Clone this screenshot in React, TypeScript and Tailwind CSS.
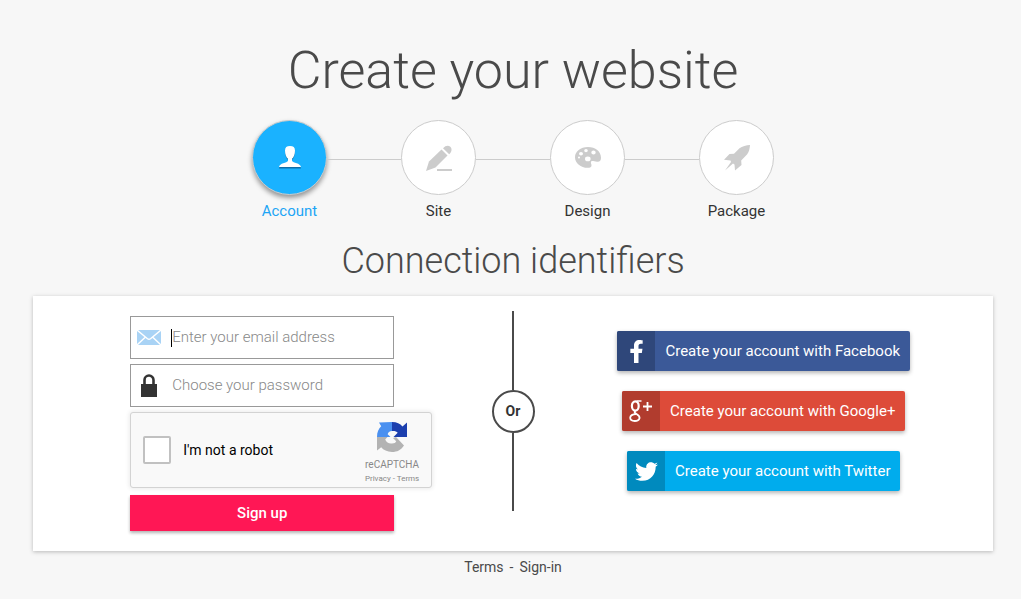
import type { ReactNode } from "react";
import { FaFacebookF, FaTwitter } from "react-icons/fa";

function UserIcon() {
  return (
    <svg width="24" height="23" viewBox="0 0 24 23" aria-hidden="true">
      <g fill="#0f6ea8" transform="translate(0 1)">
        <path d="M12 0C8.600 0 7 1.300 7 4.500c0 4 1.200 6.800 3 8.300v2.200c-1 1.800-8.500 2-9 6.500h22c-.5-4.500-8-4.700-9-6.500v-2.200c1.800-1.500 3-4.300 3-8.300C17 1.300 15.400 0 12 0z" />
      </g>
      <path
        fill="#fff"
        d="M12 0C8.600 0 7 1.300 7 4.500c0 4 1.200 6.800 3 8.300v2.200c-1 1.800-8.500 2-9 6h22c-.5-4-8-4.200-9-6v-2.200c1.800-1.500 3-4.300 3-8.300C17 1.300 15.400 0 12 0z"
      />
    </svg>
  );
}

function PencilIcon() {
  return (
    <svg width="28" height="28" viewBox="0 0 28 28" fill="#ccc" aria-hidden="true">
      <path d="M16.500 5.500 22.500 11.500 10.500 23.500 1 27 4 17.500z" />
      <path d="M18 4.200C20.500 1.300 23.500 1 25.300 2.700 27.200 4.600 27 7.500 24.200 10.200z" />
      <path d="M12 25h15v2H12z" />
    </svg>
  );
}

function PaletteIcon() {
  return (
    <svg width="26" height="21" viewBox="0 0 26 21" aria-hidden="true">
      <path
        fill="#ccc"
        fillRule="evenodd"
        d="M13 0C5.500 0 0 4.500 0 10.200 0 16.200 6 20.800 12.500 20.800c2.800 0 4-.8 4-2.300 0-1.500-.6-1.800-.6-3 0-1.200.9-1.600 2.200-1.500l3.900.7c2.600.4 4-1.200 4-4C26 4.500 20.500 0 13 0zM11 2a1.800 1.600 0 1 1 0 3.200A1.800 1.600 0 0 1 11 2zM18.500 3.500a2.200 2 0 1 1 0 4 2.200 2 0 0 1 0-4zM6 5a2 1.800 0 1 1 0 3.600A2 1.800 0 0 1 6 5zM4 9.500a1 1 0 1 1 0 2 1 1 0 0 1 0-2zM12.800 9.500a2.800 2.400 0 1 1 0 4.800 2.800 2.400 0 0 1 0-4.800z"
      />
    </svg>
  );
}

function RocketIcon() {
  return (
    <svg width="26" height="26" viewBox="0 0 26 26" fill="#ccc" aria-hidden="true">
      <path d="M26 0c-.2 3.500-1 7-3 9.500L17.200 15.500 17.500 20 11 25.500 10.500 19.500 9 18.500 1 25.500 7 17 6.500 15.500 0 14.800 5.500 9 10 8.700 15.500 3.300C18 1.200 22.500.2 26 0z" />
    </svg>
  );
}

function MailIcon() {
  return (
    <svg width="24" height="15" viewBox="0 0 24 15" aria-hidden="true">
      <path fill="#a9d3f5" d="M0 0h24v15H0z" />
      <path d="M0 0 10.500 8.700Q12 9.800 13.500 8.700L24 0M0 15 8.500 7M24 15 15.500 7" fill="none" stroke="#fff" strokeWidth="1.400" />
    </svg>
  );
}

function LockIcon() {
  return (
    <svg width="16" height="23" viewBox="0 0 16 23" aria-hidden="true">
      <path fill="#333" d="M0 10h16v13H0z" />
      <path d="M3.500 11V6a4.500 4.500 0 0 1 9 0v5" fill="none" stroke="#333" strokeWidth="2.600" />
    </svg>
  );
}

function GooglePlusIcon() {
  return (
    <svg width="24" height="22" viewBox="0 0 24 22" fill="none" stroke="#fff" aria-hidden="true">
      <ellipse cx="6.300" cy="6" rx="3.400" ry="4.600" strokeWidth="2.200" />
      <path d="M7.500 1H12.500" strokeWidth="1.400" />
      <path d="M6.500 10.500C5 12 5.500 12.800 7.500 14c2.500 1.500 3.500 2.300 3 4.300-.5 2-2.500 2.700-4.700 2.700C3 21 1.200 19.800 1.200 17.800 1.200 15.500 3.500 14.200 7 14.200" strokeWidth="1.800" />
      <path d="M14 6.500h9M18.500 2v9" strokeWidth="1.800" />
    </svg>
  );
}

function RecaptchaIcon() {
  return (
    <svg width="32" height="32" viewBox="0 0 32 32" aria-hidden="true">
      <path fill="#4a90f0" d="M16 1v9c-2.500 0-4 1.500-4.300 3.200L14.500 16H1C1 11 2.600 8 5.200 5.300L3 1.500z" />
      <path fill="#1c3fae" d="M16 1c5 0 8 1.700 10.500 4.500L31 1.500V16H17.500l4.200-4.200C20.600 10.500 18.800 9.800 16 10z" />
      <path fill="#b3b3b3" d="M1 16h10.500l-2.300 2.500C10.500 21.500 13 23 16 22.500c2.500 0 3.500-1 4.200-2.300L17 17l3-1 8 8.500C25 29 21 31 16 31c-5 0-8.500-2-10.800-4.700L1 29.500z" />
    </svg>
  );
}

const steps: { label: string; icon: ReactNode; active?: boolean }[] = [
  { label: "Account", icon: <UserIcon />, active: true },
  { label: "Site", icon: <PencilIcon /> },
  { label: "Design", icon: <PaletteIcon /> },
  { label: "Package", icon: <RocketIcon /> },
];

const providers = [
  { name: "Facebook", icon: <FaFacebookF size={23} />, box: "bg-[#3b5998]", tab: "bg-[#2f477a]" },
  { name: "Google+", icon: <GooglePlusIcon />, box: "bg-[#dd4b39]", tab: "bg-[#b13c2e]" },
  { name: "Twitter", icon: <FaTwitter size={23} />, box: "bg-[#00aced]", tab: "bg-[#008abe]" },
];

export default function App() {
  return (
    <div className="min-h-screen bg-[#f7f7f7] pt-9 pr-7 pl-[33px] font-['Roboto',sans-serif] text-[#333]">
      <header className="flex flex-col items-center">
        <h1 className="text-[52px] leading-[70px] font-light text-[#4a4a4a]">Create your website</h1>
        <ol className="mt-3.5 flex">
          {steps.map((step, i) => (
            <li key={step.label} className="flex">
              {i > 0 && <span className="mt-[39px] h-px w-[74px] bg-[#ccc]" />}
              <div className="flex w-[75px] flex-col items-center">
                <span
                  className={
                    step.active
                      ? "flex size-[75px] items-center justify-center rounded-full border border-[#ccc] bg-[#1ab2ff] shadow-[0_3px_5px_rgba(0,0,0,0.4)]"
                      : "flex size-[75px] items-center justify-center rounded-full border border-[#ccc] bg-white"
                  }
                >
                  {step.icon}
                </span>
                <span className={step.active ? "mt-1.5 text-[15px] leading-5 text-[#1da5f5]" : "mt-1.5 text-[15px] leading-5"}>
                  {step.label}
                </span>
              </div>
            </li>
          ))}
        </ol>
        <h2 className="mt-4 text-[36px] leading-12 font-light text-[#4a4a4a]">Connection identifiers</h2>
      </header>

      <main className="mt-[11px] flex bg-white pt-[15px] pb-5 shadow-[0_1px_4px_rgba(0,0,0,0.25)]">
        <section className="flex flex-1 justify-center pt-[5px]">
          <form className="w-[264px]" onSubmit={(e) => e.preventDefault()}>
            <label className="flex h-[43px] items-center border border-[#999] bg-white pl-1.5">
              <span className="flex w-[34px]"><MailIcon /></span>
              <span className="h-[18px] w-px bg-black" />
              <input
                type="email"
                aria-label="Email address"
                placeholder="Enter your email address"
                className="min-w-0 flex-1 bg-transparent text-[15px] font-light outline-none placeholder:text-[#888]"
              />
            </label>
            <label className="mt-[5px] flex h-[43px] items-center border border-[#999] bg-white pl-2.5">
              <span className="flex w-[31px]"><LockIcon /></span>
              <input
                type="password"
                aria-label="Password"
                placeholder="Choose your password"
                className="min-w-0 flex-1 bg-transparent text-[15px] font-light outline-none placeholder:text-[#888]"
              />
            </label>
            <div className="mt-[5px] flex h-[76px] w-[302px] items-center justify-between rounded-[3px] border border-[#d3d3d3] bg-[#f9f9f9] pr-3 pl-3 shadow-[0_0_4px_1px_rgba(0,0,0,0.08)]">
              <label className="flex items-center gap-3 text-[14px] text-black">
                <input type="checkbox" className="size-7 appearance-none rounded-[2px] border-2 border-[#c1c1c1] bg-white" />
                I'm not a robot
              </label>
              <div className="flex flex-col items-center pt-1.5 text-[#888]">
                <RecaptchaIcon />
                <span className="mt-1 text-[10px] leading-4">reCAPTCHA</span>
                <span className="text-[8px] leading-3">
                  <a href="#privacy">Privacy</a> - <a href="#terms">Terms</a>
                </span>
              </div>
            </div>
            <button
              type="submit"
              className="mt-[7px] h-9 w-full bg-[#ff1755] text-[15px] font-medium text-white shadow-[0_2px_3px_rgba(0,0,0,0.3)]"
            >
              Sign up
            </button>
          </form>
        </section>

        <div className="flex h-[200px] w-[43px] flex-col items-center">
          <span className="w-0.5 flex-1 bg-[#4a4a4a]" />
          <span className="flex size-[43px] items-center justify-center rounded-full border-2 border-[#4a4a4a] text-[14px] font-bold">
            Or
          </span>
          <span className="w-0.5 flex-1 bg-[#4a4a4a]" />
        </div>

        <section className="flex flex-1 flex-col items-center gap-5 pt-5">
          {providers.map((p) => (
            <button
              key={p.name}
              type="button"
              className={`flex h-10 items-center overflow-hidden rounded-[2px] text-[15px] text-white shadow-[0_2px_4px_rgba(0,0,0,0.3)] ${p.box}`}
            >
              <span className={`flex h-full w-[38px] items-center justify-center ${p.tab}`}>{p.icon}</span>
              <span className="px-2.5">Create your account with {p.name}</span>
            </button>
          ))}
        </section>
      </main>

      <footer className="mt-1.5 flex justify-center gap-1.5 text-[14px] leading-5 text-[#4a4a4a]">
        <a href="#terms">Terms</a>
        <span>-</span>
        <a href="#signin">Sign-in</a>
      </footer>
    </div>
  );
}
